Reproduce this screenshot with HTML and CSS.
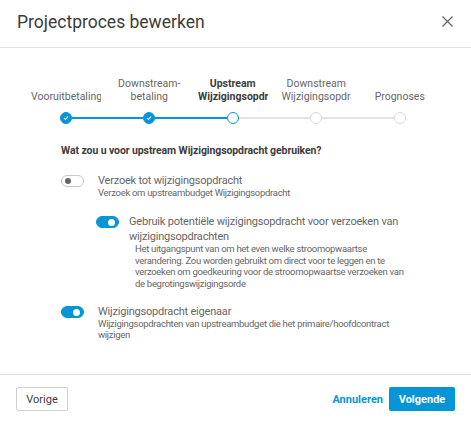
FILE: index.html
```html
<!DOCTYPE html>
<html lang="nl">
<head>
    <meta charset="UTF-8">
    <title>Projectproces bewerken</title>
    <link rel="stylesheet" href="styles.css">
</head>
<body>
    <div class="dialog">
        <div class="dialog-header">
            <h2>Projectproces bewerken</h2>
            <button class="close-btn" aria-label="Sluiten">
                <svg width="11" height="11" viewBox="0 0 11 11"><path d="M0.5 0.5 L10.5 10.5 M10.5 0.5 L0.5 10.5" stroke="#666" stroke-width="1.2" fill="none"/></svg>
            </button>
        </div>

        <div class="dialog-body">
            <!-- Stepper -->
            <div class="stepper">
                <div class="step done">
                    <div class="step-label"><span>Vooruitbetaling</span></div>
                    <div class="step-track">
                        <span class="seg none"></span>
                        <span class="dot"><svg width="6" height="6" viewBox="0 0 6 6"><path d="M1 3.2 L2.4 4.5 L5 1.5" stroke="#fff" stroke-width="1.1" fill="none"/></svg></span>
                        <span class="seg blue"></span>
                    </div>
                </div>
                <div class="step done">
                    <div class="step-label"><span>Downstream-</span><span>betaling</span></div>
                    <div class="step-track">
                        <span class="seg blue"></span>
                        <span class="dot"><svg width="6" height="6" viewBox="0 0 6 6"><path d="M1 3.2 L2.4 4.5 L5 1.5" stroke="#fff" stroke-width="1.1" fill="none"/></svg></span>
                        <span class="seg blue"></span>
                    </div>
                </div>
                <div class="step current">
                    <div class="step-label"><span>Upstream</span><span>Wijzigingsopdracht</span></div>
                    <div class="step-track">
                        <span class="seg blue"></span>
                        <span class="dot"></span>
                        <span class="seg"></span>
                    </div>
                </div>
                <div class="step">
                    <div class="step-label"><span>Downstream</span><span>Wijzigingsopdracht</span></div>
                    <div class="step-track">
                        <span class="seg"></span>
                        <span class="dot"></span>
                        <span class="seg"></span>
                    </div>
                </div>
                <div class="step">
                    <div class="step-label"><span>Prognoses</span></div>
                    <div class="step-track">
                        <span class="seg"></span>
                        <span class="dot"></span>
                        <span class="seg none"></span>
                    </div>
                </div>
            </div>

            <div class="options">
                <p class="question">Wat zou u voor upstream Wijzigingsopdracht gebruiken?</p>

                <div class="option">
                    <span class="toggle"></span>
                    <div class="option-text">
                        <div class="option-title">Verzoek tot wijzigingsopdracht</div>
                        <div class="option-desc">Verzoek om upstreambudget Wijzigingsopdracht</div>
                    </div>
                </div>

                <div class="option nested">
                    <span class="toggle on"></span>
                    <div class="option-text">
                        <div class="option-title">Gebruik potentiële wijzigingsopdracht voor verzoeken van wijzigingsopdrachten</div>
                        <div class="option-desc">Het uitgangspunt van om het even welke stroomopwaartse verandering. Zou worden gebruikt om direct voor te leggen en te verzoeken om goedkeuring voor de stroomopwaartse verzoeken van de begrotingswijzigingsorde</div>
                    </div>
                </div>

                <div class="option">
                    <span class="toggle on"></span>
                    <div class="option-text">
                        <div class="option-title">Wijzigingsopdracht eigenaar</div>
                        <div class="option-desc">Wijzigingsopdrachten van upstreambudget die het primaire/hoofdcontract wijzigen</div>
                    </div>
                </div>
            </div>
        </div>

        <div class="dialog-footer">
            <button class="btn btn-outline">Vorige</button>
            <div class="footer-right">
                <button class="btn btn-link">Annuleren</button>
                <button class="btn btn-primary">Volgende</button>
            </div>
        </div>
    </div>
</body>
</html>
```

FILE: styles.css
```css
:root {
    --blue: #0696d7;
    --text: #3c3c3c;
    --muted: #666;
    --line: #e0e0e0;
}

* {
    box-sizing: border-box;
}

body {
    margin: 0;
    background: #fff;
    font-family: Roboto, "Liberation Sans", sans-serif;
    color: var(--text);
}

.dialog {
    width: 471px;
    height: 422px;
    display: flex;
    flex-direction: column;
    background: #fff;
}

.dialog-header {
    height: 48px;
    display: flex;
    align-items: center;
    justify-content: space-between;
    padding: 0 18px 4px 17px;
    border-bottom: 1px solid var(--line);
}

.dialog-header h2 {
    margin: 0;
    font-size: 17.5px;
    font-weight: 400;
    color: var(--text);
}

.close-btn {
    background: none;
    border: none;
    padding: 0;
    width: 11px;
    height: 11px;
    display: flex;
    cursor: pointer;
}

.dialog-body {
    flex: 1;
    padding-top: 29px;
}

/* Stepper */
.stepper {
    display: grid;
    grid-template-columns: repeat(5, 83.5px);
    margin-left: 24px;
}

.step-label {
    height: 26px;
    display: flex;
    flex-direction: column;
    justify-content: flex-end;
    padding: 0 7px;
    font-size: 10.5px;
    line-height: 13px;
    color: var(--muted);
    text-align: center;
}

.step-label span {
    display: block;
    white-space: nowrap;
    overflow: hidden;
}

.step.current .step-label {
    font-weight: 700;
    color: var(--text);
}

.step-track {
    display: flex;
    align-items: center;
    height: 12px;
    margin-top: 9px;
}

.seg {
    flex: 1;
    height: 2px;
    background: #e2e2e2;
}

.seg.blue {
    background: var(--blue);
}

.seg.none {
    background: transparent;
}

.dot {
    width: 12px;
    height: 12px;
    border-radius: 50%;
    border: 1px solid #dadada;
    background: #fff;
    display: flex;
    align-items: center;
    justify-content: center;
}

.step.done .dot {
    background: var(--blue);
    border-color: var(--blue);
}

.step.current .dot {
    border: 1.5px solid var(--blue);
}

/* Options */
.options {
    padding: 20px 61px 0 61px;
}

.question {
    margin: 0 0 16px;
    font-size: 10.5px;
    line-height: 14px;
    letter-spacing: -0.1px;
    font-weight: 700;
    color: var(--text);
}

.option {
    display: flex;
    margin-bottom: 16px;
}

.option.nested {
    margin-top: 17px;
    padding-left: 35px;
}

.toggle {
    flex: none;
    position: relative;
    width: 23px;
    height: 12px;
    margin: 1px 14px 0 0;
    border-radius: 6px;
    border: 1px solid #c8c8c8;
    background: #fff;
}

.toggle::after {
    content: "";
    position: absolute;
    top: 2px;
    left: 3px;
    width: 6px;
    height: 6px;
    border-radius: 50%;
    background: #666;
}

.toggle.on {
    background: var(--blue);
    border-color: var(--blue);
}

.toggle.on::after {
    left: auto;
    right: 3px;
    top: 1.5px;
    width: 7px;
    height: 7px;
    background: #fff;
}

.option.nested .toggle {
    margin-right: 10px;
}

.option-title {
    font-size: 11px;
    line-height: 14.5px;
    letter-spacing: -0.2px;
    color: var(--muted);
}

.option-desc {
    margin-top: -2px;
    font-size: 9.5px;
    line-height: 11.5px;
    letter-spacing: -0.3px;
    color: var(--muted);
}

.option.nested .option-desc {
    padding-left: 6px;
    margin-top: -1px;
}

/* Footer */
.dialog-footer {
    height: 48px;
    border-top: 1px solid var(--line);
    display: flex;
    justify-content: space-between;
    align-items: flex-start;
    padding: 12px 16px 0;
}

.footer-right {
    display: flex;
    gap: 4px;
}

.btn {
    height: 24px;
    border-radius: 2px;
    font-family: inherit;
    font-size: 11px;
    cursor: pointer;
}

.btn-outline {
    width: 52px;
    background: #fff;
    border: 1px solid #cfcfcf;
    color: var(--text);
}

.btn-link {
    background: none;
    border: none;
    padding: 0 2px;
    color: var(--blue);
    font-weight: 700;
}

.btn-primary {
    width: 66px;
    background: var(--blue);
    border: none;
    color: #fff;
    font-weight: 700;
}
```
